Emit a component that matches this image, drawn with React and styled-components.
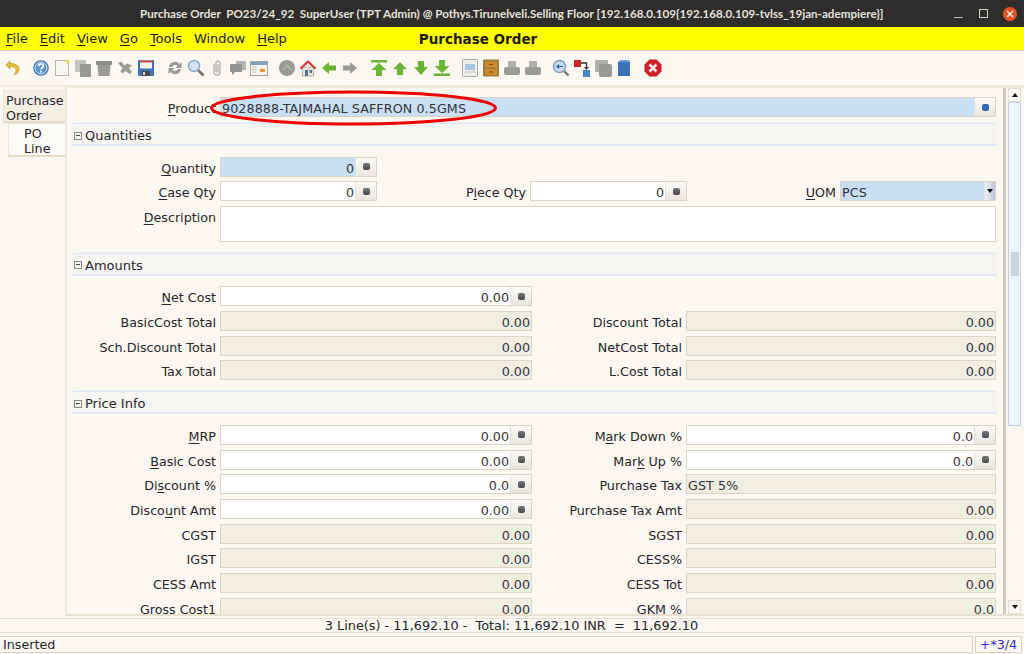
import React from 'react';
import styled, { createGlobalStyle } from 'styled-components';

const GlobalStyle = createGlobalStyle`
	html, body {
		margin: 0;
		padding: 0;
		background: #fbf8f1;
	}
	body {
		font-family: 'DejaVu Sans', sans-serif;
		font-size: 12.7px;
		color: #26262b;
	}
`;

const Window = styled.div`
	position: relative;
	display: flex;
	flex-direction: column;
	width: 1024px;
	height: 654px;
	overflow: hidden;
	background: #fbf8f1;
`;

const TitleBar = styled.header`
	flex: 0 0 27px;
	display: flex;
	align-items: center;
	background: #2f2d2c;
	color: #e4e2de;
	font-family: 'Lato', sans-serif;
	font-size: 11.65px;
	font-weight: 700;
	white-space: pre;
`;

const TitleText = styled.span`
	flex: 0 0 790px;
	margin-left: 140px;
`;

const WinButton = styled.span`
	display: flex;
	align-items: center;
	justify-content: center;
	width: 14px;
	height: 14px;
	margin-left: ${p => p.$gap}px;
	border-radius: 50%;
	background: ${p => (p.$close ? '#e95420' : 'transparent')};
`;

const MenuBar = styled.nav`
	flex: 0 0 24px;
	display: flex;
	align-items: center;
	padding-left: 6px;
	background: #ffff00;
	border-bottom: 1px solid #d8d4c0;
	box-sizing: border-box;
`;

const MenuItem = styled.span`
	margin-right: 12px;
	font-size: 13px;
	color: #20200a;
`;

const Key = styled.span`
	text-decoration: underline;
	text-underline-offset: 2px;
`;

const FormTitle = styled.span`
	margin-left: 120px;
	font-size: 13.500px;
	font-weight: 700;
	color: #1c1c10;
`;

const Toolbar = styled.div`
	flex: 0 0 35px;
	display: flex;
	align-items: center;
	gap: 7.4px;
	padding-left: 2.5px;
	box-sizing: border-box;
	border-bottom: 1px solid #efe8da;
`;

const ToolGroup = styled.div`
	display: flex;
	align-items: center;
`;

const ToolSlot = styled.span`
	display: flex;
	align-items: center;
	justify-content: center;
	width: 21px;
	height: 22px;
`;

const Main = styled.main`
	flex: 1;
	display: flex;
	min-height: 0;
`;

const TabColumn = styled.div`
	flex: 0 0 65px;
	display: flex;
	flex-direction: column;
	align-items: flex-end;
	padding-top: 4px;
	box-sizing: border-box;
`;

const Tab = styled.div`
	box-sizing: border-box;
	width: ${p => (p.$sub ? 57 : 62)}px;
	height: ${p => (p.$sub ? 34 : 33)}px;
	padding: 2px 0 0 ${p => (p.$sub ? 15 : 2)}px;
	line-height: 15px;
	background: ${p => (p.$sub ? '#fdfbf6' : '#f4efe3')};
	border: 1px solid #ebe4d4;
	border-right: none;
	border-bottom: 2px solid #e4dcc9;
`;

const Panel = styled.div`
	flex: 1;
	display: flex;
	min-width: 0;
	border: 2px solid #efe8da;
	border-right: none;
	border-bottom-color: #e8e1d2;
`;

const Form = styled.div`
	flex: 0 0 936px;
	box-sizing: border-box;
	padding: 9px 6px 0 5px;
	overflow: hidden;
`;

const ProductRow = styled.div`
	display: grid;
	grid-template-columns: 148px 776px;
	height: 20px;
	align-items: center;
`;

const Label = styled.label`
	padding: 3px 4px 0 0;
	margin-top: ${p => p.$top || 0}px;
	align-self: ${p => (p.$top ? 'start' : 'auto')};
	text-align: right;
	white-space: nowrap;
`;

const SectionHead = styled.div`
	display: flex;
	align-items: center;
	box-sizing: border-box;
	height: 23px;
	margin: ${p => p.$top}px 0 ${p => p.$bottom}px;
	padding: 3px 0 0 2px;
	font-size: 13px;
	background: #f6f5f1;
	border-top: 1px solid #dfe8f6;
	border-bottom: 2px solid #dfe8f6;
	box-shadow: 0 -6px 0 -5px #eceef0;
`;

const Toggle = styled.span`
	position: relative;
	box-sizing: border-box;
	width: 8px;
	height: 8px;
	margin-right: 3px;
	border: 1px solid #8a8a86;
	&::after {
		content: '';
		position: absolute;
		left: 1px;
		right: 1px;
		top: 2px;
		height: 1px;
		background: #44443f;
	}
`;

const Rows = styled.div`
	display: grid;
	grid-template-columns: ${p => p.$cols};
	grid-auto-rows: 20px;
	row-gap: 4.7px;
	align-items: center;
`;

const Field = styled.div`
	display: flex;
	align-items: stretch;
	box-sizing: border-box;
	height: ${p => p.$height || 20}px;
	grid-column: ${p => p.$span || 'auto'};
	align-self: start;
	border: 1px solid #dcd5c5;
	background: ${p =>
		p.$tone === 'mandatory' ? '#c9dff3' : p.$tone === 'readonly' ? '#f0eee0' : '#fff'};
	color: #33333a;
	line-height: 19px;
`;

const Value = styled.span`
	flex: 1;
	min-width: 0;
	height: 17px;
	padding: 1px ${p => (p.$left ? 0 : 1)}px 0 ${p => (p.$left ? 1 : 0)}px;
	letter-spacing: ${p => (p.$left ? 0.1 : 0)}px;
	text-align: ${p => (p.$left ? 'left' : 'right')};
	white-space: nowrap;
`;

const FieldButton = styled.span`
	flex: 0 0 20px;
	display: flex;
	align-items: center;
	justify-content: center;
	background: linear-gradient(#fbfaf7, #e9e6de);
	border-left: 1px solid #e6e1d6;
`;

const Dot = styled.span`
	width: 7px;
	height: 7px;
	border-radius: 2px;
	background: ${p => p.$color || 'linear-gradient(#77777a, #48484c)'};
`;

const Combo = styled.span`
	flex: 0 0 10px;
	display: flex;
	align-items: center;
	justify-content: center;
	background: linear-gradient(90deg, #eef2f7, #b9c6d6);
	border-left: 1px solid #e6e1d6;
`;

const Arrow = styled.span`
	width: 0;
	height: 0;
	border-left: 3.5px solid transparent;
	border-right: 3.5px solid transparent;
	${p => (p.$up ? 'border-bottom: 4px solid #111;' : 'border-top: 4px solid #111;')}
`;

const Scrollbar = styled.div`
	flex: 1;
	display: flex;
	flex-direction: column;
	box-sizing: border-box;
	padding: 0 3px 0 2px;
	border-left: 3px solid #cfcbc1;
`;

const ScrollButton = styled.span`
	flex: 0 0 12px;
	display: flex;
	align-items: center;
	justify-content: center;
	background: #fbf9f4;
	border: 1px solid #e3ded2;
`;

const Thumb = styled.div`
	flex: 0 0 324px;
	display: flex;
	align-items: center;
	justify-content: center;
	background: #edf3fa;
	border: 1px solid #c3d0e2;
	box-sizing: border-box;
`;

const Grip = styled.span`
	width: 8px;
	height: 24px;
	background-color: #e4e9ef;
	background-image: radial-gradient(#c9d1da 0.7px, transparent 0.8px);
	background-size: 2px 2px;
`;

const Track = styled.div`
	flex: 1;
`;

const Summary = styled.div`
	flex: 0 0 15px;
	box-sizing: border-box;
	min-height: 0;
	margin-top: 2px;
	font-size: 12.85px;
	text-align: center;
	line-height: 13px;
	white-space: pre;
	padding-right: 1px;
	border-top: 1px solid #e6e0d3;
	border-bottom: 1px solid #e6e0d3;
`;

const StatusBar = styled.footer`
	flex: 0 0 17px;
	display: flex;
	gap: 2px;
	min-height: 0;
	margin: 3px 2px 1px 0;
`;

const StatusText = styled.div`
	flex: 1;
	box-sizing: border-box;
	padding: 1px 0 0 3px;
	line-height: 14px;
	border: 1px solid #d6d2c8;
	border-left: none;
`;

const StatusCount = styled.div`
	flex: 0 0 47px;
	box-sizing: border-box;
	padding-top: 1px;
	text-align: center;
	line-height: 14px;
	color: #2b2bf0;
	border: 1px solid #d6d2c8;
`;

const Highlight = styled.svg`
	position: absolute;
	left: 208px;
	top: 88px;
	pointer-events: none;
`;

/* toolbar drawings, 18x18 */
const grey = '#9a9a97';
const green = '#6bb435';
const drawings = {
	undo: <path d="M6 2 2 6l4 4V7.500c3.500 0 6 1 6 4 0 1.500-.8 3-2 4.500 3.500-1 5-3.500 5-6 0-4-4-5.500-9-5.500z" fill="#e3c136" stroke="#a88a1c" strokeWidth=".6" />,
	help: (
		<>
			<circle cx="9" cy="9" r="7.800" fill="#3f74b8" />
			<circle cx="9" cy="9" r="6" fill="#5f93d0" stroke="#dce8f5" strokeWidth="1" />
			<path d="M6.800 7.200c0-3 4.600-3 4.600-.2 0 1.800-2.400 1.800-2.400 3.600" fill="none" stroke="#fff" strokeWidth="1.700" />
			<rect x="8.100" y="11.800" width="1.800" height="1.800" fill="#fff" />
		</>
	),
	doc: (
		<>
			<rect x="2.500" y="1.500" width="13" height="15" fill="#f6f5f0" stroke="#b5b5ae" />
			<circle cx="14.500" cy="2.500" r="2" fill="#f3d860" />
		</>
	),
	copy: (
		<>
			<rect x="1" y="1" width="11" height="12" fill="#c2c2be" />
			<rect x="6" y="5" width="11" height="13" fill={grey} />
		</>
	),
	trash: (
		<>
			<rect x="1" y="2" width="16" height="4" rx="1" fill="#8a8a87" />
			<path d="M2.500 6h13l-1 11h-11z" fill={grey} />
		</>
	),
	cancel: <path d="M2 4l3-1.500 3.500 4L11 4.500l5 2-3 2.500 3 4-2.500 2-4-3-3 2.500-2-2 2-3.500z" fill={grey} />,
	save: (
		<>
			<rect x="1" y="1" width="16" height="16" rx="1" fill="#3f74b0" />
			<rect x="3" y="1.500" width="12" height="8" fill="#f3f1ea" />
			<rect x="3" y="1.500" width="12" height="2" fill="#cf4a3c" />
			<rect x="5" y="12" width="8" height="5" fill="#4a4a48" />
			<rect x="6" y="13" width="2" height="3" fill="#ddd" />
		</>
	),
	refresh: (
		<>
			<path d="M3 8a6 6 0 0 1 10.500-3L15.500 3v6h-6l2-2A3.500 3.500 0 0 0 6 8z" fill={grey} />
			<path d="M15 10a6 6 0 0 1-10.500 3L2.500 15V9h6l-2 2A3.500 3.500 0 0 0 12 10z" fill={grey} />
		</>
	),
	find: (
		<>
			<line x1="10" y1="10" x2="16.500" y2="16.500" stroke="#77776f" strokeWidth="2.600" />
			<circle cx="7" cy="7" r="5.500" fill="#cfe3f5" stroke="#8fabc6" strokeWidth="1.500" />
		</>
	),
	clip: <path d="M6 5v8a3 3 0 0 0 6 0V4a2 2 0 0 0-4 0v8a.8.8 0 0 0 2 0V5" fill="none" stroke="#b0b0ab" strokeWidth="1.300" />,
	chat: (
		<>
			<path d="M7 2h9a1 1 0 0 1 1 1v7a1 1 0 0 1-1 1H7z" fill="#b4b4b0" />
			<path d="M2 5h10a1 1 0 0 1 1 1v6a1 1 0 0 1-1 1H6l-3 3v-3H2a1 1 0 0 1-1-1V6a1 1 0 0 1 1-1z" fill="#939391" />
		</>
	),
	calendar: (
		<>
			<rect x=".5" y="2.500" width="17" height="14" fill="#f7f5ee" stroke="#a6a6a0" />
			<rect x="1" y="3" width="16" height="3" fill="#7d9fc8" />
			<rect x="10" y="10" width="5" height="3" fill="#e9962f" />
			<path d="M2 8h5M2 10.500h5M2 13h5" stroke="#c8c8c0" />
		</>
	),
	archive: (
		<>
			<circle cx="9" cy="9" r="8" fill={grey} />
			<path d="M4.500 11 9 6.500l4.500 4.500" fill="none" stroke="#b4b4b1" strokeWidth="1.600" />
		</>
	),
	home: (
		<>
			<rect x="3.500" y="8" width="11" height="9" fill="#e8e6df" stroke="#8a8a84" strokeWidth=".6" />
			<path d="M9 1 .8 9l1.400 1.400L9 4l6.800 6.400L17.200 9z" fill="#d8353a" />
			<rect x="6" y="11" width="3" height="6" fill="#4d6f96" />
			<rect x="10.500" y="11" width="2.500" height="3" fill="#4d6f96" />
		</>
	),
	left: <path d="M2 9l7-6v3.500h7v5H9V15z" fill={green} />,
	right: <path d="M16 9 9 3v3.500H2v5h7V15z" fill={grey} />,
	first: (
		<>
			<rect x="1" y="1" width="16" height="2.500" fill={green} />
			<path d="M9 4 1.500 11H6v6h6v-6h4.500z" fill={green} />
		</>
	),
	up: <path d="M9 3 2 10h4v6h6v-6h4z" fill={green} />,
	down: <path d="M9 16 2 8h4V2h6v6h4z" fill={green} />,
	last: (
		<>
			<rect x="1" y="14.500" width="16" height="2.500" fill={green} />
			<path d="M9 14 1.500 7H6V1h6v6h4.500z" fill={green} />
		</>
	),
	report: (
		<>
			<rect x="1.500" y=".5" width="15" height="17" rx="1" fill="#f0f0ea" stroke="#aaa9a2" />
			<rect x="4" y="5" width="10" height="6" fill="#a5c5e4" />
			<path d="M4 13h10" stroke="#bbb" />
		</>
	),
	cabinet: (
		<>
			<rect x="1" y=".5" width="16" height="17" rx="1" fill="#9c7d3d" />
			<rect x="3" y="2.500" width="12" height="6" fill="#cf8a2a" />
			<rect x="3" y="10" width="12" height="6" fill="#cf8a2a" />
			<path d="M7 5.500h4M7 13h4" stroke="#6a4f1c" />
		</>
	),
	print: (
		<>
			<rect x="5" y="2" width="8" height="7" rx="1" fill="#aeaeaa" />
			<rect x="1" y="8" width="16" height="8" rx="2" fill={grey} />
		</>
	),
	zoom: (
		<>
			<line x1="11" y1="11" x2="16.500" y2="16.500" stroke="#77776f" strokeWidth="2.400" />
			<circle cx="7.500" cy="7.500" r="6" fill="#c7def2" stroke="#7f9fbd" strokeWidth="1.500" />
			<path d="M11 7.500H5m2-2-2 2 2 2" fill="none" stroke="#2f5f96" strokeWidth="1.200" />
		</>
	),
	move: (
		<>
			<rect x="1" y="1" width="7" height="7" fill="#d3202a" />
			<rect x="10" y="11" width="7" height="7" fill="#4a86c0" />
			<path d="M8 4h5.500v5" fill="none" stroke="#333" strokeWidth="1.300" />
			<path d="M11 8h5l-2.500 3z" fill="#333" />
		</>
	),
	module: (
		<>
			<rect x="1" y="1" width="13" height="12" rx="1" fill="#aeaeaa" />
			<rect x="5" y="5" width="13" height="13" rx="2" fill={grey} />
		</>
	),
	cube: (
		<>
			<path d="M3 3 6 1h7l2 2v14H3z" fill="#3b72b6" />
			<path d="M3 3 6 1h7l2 2z" fill="#6b9bd2" />
		</>
	),
	close: (
		<>
			<path d="M5.500.5h7l5 5v7l-5 5h-7l-5-5v-7z" fill="#d0202c" />
			<path d="M5.500 5.500l7 7m0-7-7 7" stroke="#f7e8e6" strokeWidth="2.600" />
		</>
	),
};

const toolGroups = [
	['undo'],
	['help', 'doc', 'copy', 'trash', 'cancel', 'save'],
	['refresh', 'find', 'clip', 'chat', 'calendar'],
	['archive', 'home', 'left', 'right'],
	['first', 'up', 'down', 'last'],
	['report', 'cabinet', 'print', 'print'],
	['zoom', 'move', 'module', 'cube'],
	['close'],
];

const NumberField = ({ value, tone }) => (
	<Field $tone={tone}>
		<Value>{value}</Value>
		{tone !== 'readonly' && (
			<FieldButton>
				<Dot />
			</FieldButton>
		)}
	</Field>
);

const TextField = ({ value, tone }) => (
	<Field $tone={tone}>
		<Value $left>{value}</Value>
	</Field>
);

const Section = ({ title, top, bottom }) => (
	<SectionHead $top={top} $bottom={bottom}>
		<Toggle />
		{title}
	</SectionHead>
);

const keyed = (text, at) => (
	<>
		{text.slice(0, at)}
		<Key>{text[at]}</Key>
		{text.slice(at + 1)}
	</>
);

const menus = [
	['File', 0],
	['Edit', 0],
	['View', 0],
	['Go', 0],
	['Tools', 0],
	['Window', -1],
	['Help', 0],
];

const twoCols = '148px 312px 154px 310px';

const App = () => (
	<Window>
		<GlobalStyle />
		<TitleBar>
			<TitleText>
				Purchase Order  PO23/24_92  SuperUser (TPT Admin) @ Pothys.Tirunelveli.Selling Floor [192.168.0.109{'{'}192.168.0.109-tvlss_19jan-adempiere{'}'}]
			</TitleText>
			<WinButton $gap={22}>
				<svg width="10" height="10"><line x1="0" y1="8.500" x2="9" y2="8.500" stroke="#bdbab5" /></svg>
			</WinButton>
			<WinButton $gap={11}>
				<svg width="10" height="10"><rect x=".5" y=".5" width="8" height="8" fill="none" stroke="#d5d2cd" /></svg>
			</WinButton>
			<WinButton $gap={12} $close>
				<svg width="8" height="8"><path d="M1 1l6 6m0-6-6 6" stroke="#fff" strokeWidth="1.200" /></svg>
			</WinButton>
		</TitleBar>

		<MenuBar>
			{menus.map(([name, at]) => (
				<MenuItem key={name}>{at < 0 ? name : keyed(name, at)}</MenuItem>
			))}
			<FormTitle>Purchase Order</FormTitle>
		</MenuBar>

		<Toolbar>
			{toolGroups.map((group, i) => (
				<ToolGroup key={i}>
					{group.map((name, j) => (
						<ToolSlot key={j}>
							<svg width="18" height="18" viewBox="0 0 18 18">{drawings[name]}</svg>
						</ToolSlot>
					))}
				</ToolGroup>
			))}
		</Toolbar>

		<Main>
			<TabColumn>
				<Tab>Purchase<br />Order</Tab>
				<Tab $sub>PO<br />Line</Tab>
			</TabColumn>
			<Panel>
				<Form>
					<ProductRow>
						<Label>{keyed('Product', 0)}</Label>
						<Field $tone="mandatory">
							<Value $left>9028888-TAJMAHAL SAFFRON 0.5GMS</Value>
							<FieldButton>
								<Dot $color="#3468ac" />
							</FieldButton>
						</Field>
					</ProductRow>

					<Section title="Quantities" top={6} bottom={10.6} />
					<Rows $cols="148px 157px 153px 157px 153px 156px">
						<Label>{keyed('Quantity', 0)}</Label>
						<NumberField value="0" tone="mandatory" />
						<span />
						<span />
						<span />
						<span />
						<Label>{keyed('Case Qty', 0)}</Label>
						<NumberField value="0" />
						<Label>{keyed('Piece Qty', 1)}</Label>
						<NumberField value="0" />
						<Label>{keyed('UOM', 0)}</Label>
						<Field $tone="mandatory">
							<Value $left>PCS</Value>
							<Combo>
								<Arrow />
							</Combo>
						</Field>
						<Label $top={1}>{keyed('Description', 0)}</Label>
						<Field $span="2 / 7" $height={36} />
					</Rows>

					<Section title="Amounts" top={27} bottom={10.2} />
					<Rows $cols={twoCols}>
						<Label>{keyed('Net Cost', 0)}</Label>
						<NumberField value="0.00" />
						<span />
						<span />
						<Label>BasicCost Total</Label>
						<NumberField value="0.00" tone="readonly" />
						<Label>Discount Total</Label>
						<NumberField value="0.00" tone="readonly" />
						<Label>Sch.Discount Total</Label>
						<NumberField value="0.00" tone="readonly" />
						<Label>NetCost Total</Label>
						<NumberField value="0.00" tone="readonly" />
						<Label>Tax Total</Label>
						<NumberField value="0.00" tone="readonly" />
						<Label>L.Cost Total</Label>
						<NumberField value="0.00" tone="readonly" />
					</Rows>

					<Section title="Price Info" top={11.2} bottom={10.55} />
					<Rows $cols={twoCols}>
						<Label>{keyed('MRP', 0)}</Label>
						<NumberField value="0.00" />
						<Label>{keyed('Mark Down %', 1)}</Label>
						<NumberField value="0.0" />
						<Label>{keyed('Basic Cost', 0)}</Label>
						<NumberField value="0.00" />
						<Label>{keyed('Mark Up %', 3)}</Label>
						<NumberField value="0.0" />
						<Label>{keyed('Discount %', 2)}</Label>
						<NumberField value="0.0" />
						<Label>Purchase Tax</Label>
						<TextField value="GST 5%" tone="readonly" />
						<Label>{keyed('Discount Amt', 5)}</Label>
						<NumberField value="0.00" />
						<Label>Purchase Tax Amt</Label>
						<NumberField value="0.00" tone="readonly" />
						<Label>CGST</Label>
						<NumberField value="0.00" tone="readonly" />
						<Label>SGST</Label>
						<NumberField value="0.00" tone="readonly" />
						<Label>IGST</Label>
						<NumberField value="0.00" tone="readonly" />
						<Label>CESS%</Label>
						<NumberField value="" tone="readonly" />
						<Label>CESS Amt</Label>
						<NumberField value="0.00" tone="readonly" />
						<Label>CESS Tot</Label>
						<NumberField value="0.00" tone="readonly" />
						<Label>Gross Cost1</Label>
						<NumberField value="0.00" tone="readonly" />
						<Label>GKM %</Label>
						<NumberField value="0.0" tone="readonly" />
					</Rows>
				</Form>
				<Scrollbar>
					<ScrollButton>
						<Arrow $up />
					</ScrollButton>
					<Thumb>
						<Grip />
					</Thumb>
					<Track />
					<ScrollButton>
						<Arrow />
					</ScrollButton>
				</Scrollbar>
			</Panel>
		</Main>

		<Summary>3 Line(s) - 11,692.10 -  Total: 11,692.10 INR  =  11,692.10</Summary>
		<StatusBar>
			<StatusText>Inserted</StatusText>
			<StatusCount>+*3/4</StatusCount>
		</StatusBar>

		<Highlight width="296" height="40" viewBox="0 0 296 40">
			<ellipse cx="145.500" cy="20" rx="142" ry="16" fill="none" stroke="#ee0000" strokeWidth="3" />
		</Highlight>
	</Window>
);

export default App;
